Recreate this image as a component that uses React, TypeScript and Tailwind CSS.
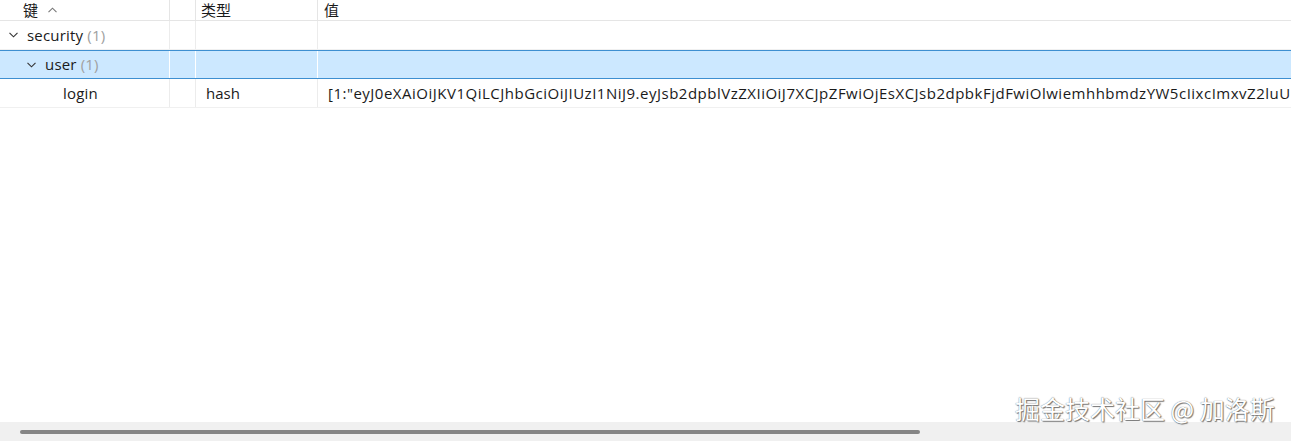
import React from "react";

type Row = {
  key: string;
  count?: number;
  depth: number;
  expanded?: boolean;
  type?: string;
  value?: string;
  selected?: boolean;
};

const token =
  '[1:"eyJ0eXAiOiJKV1QiLCJhbGciOiJIUzI1NiJ9.eyJsb2dpblVzZXIiOiJ7XCJpZFwiOjEsXCJsb2dpbkFjdFwiOlwiemhhbmdzYW5cIixcImxvZ2luU';

const rows: Row[] = [
  { key: "security", count: 1, depth: 0, expanded: true },
  { key: "user", count: 1, depth: 1, expanded: true, selected: true },
  { key: "login", depth: 2, type: "hash", value: token },
];

const cols = "grid grid-cols-[170px_26px_122px_1fr]";
const font = { fontFamily: '"Open Sans", "Noto Sans CJK SC", sans-serif' };

function Chevron({ dir }: { dir: "up" | "down" }) {
  return (
    <svg width="9" height="6" viewBox="0 0 9 6" className="shrink-0">
      <path
        d={dir === "down" ? "M0.5 0.8 L4.5 4.8 L8.5 0.8" : "M0.5 5.2 L4.5 1.2 L8.5 5.2"}
        fill="none"
        stroke={dir === "down" ? "#333" : "#777"}
        strokeWidth="1.1"
      />
    </svg>
  );
}

export default function App() {
  return (
    <div
      className="relative w-[1291px] h-[441px] bg-white flex flex-col overflow-hidden text-[15px] text-[#1a1a1a]"
      style={font}
    >
      <div className="flex-1 overflow-hidden">
        {/* header */}
        <div className={`${cols} h-[21px] border-b border-[#e5e5e5]`}>
          <div className="flex items-center gap-[10px] pl-[23px] border-r border-[#e5e5e5]">
            <span className="leading-none">键</span>
            <Chevron dir="up" />
          </div>
          <div className="border-r border-[#e5e5e5]" />
          <div className="flex items-center pl-[5px] border-r border-[#e5e5e5] leading-none">类型</div>
          <div className="flex items-center pl-[6px] leading-none">值</div>
        </div>

        {rows.map((r) => (
          <div
            key={r.key}
            className={`${cols} h-[29px] ${
              r.selected
                ? "bg-[#cce8ff] border-y border-[#3d8fd1]"
                : "border-b border-[#f0f0f0]"
            }`}
          >
            <div
              className={`flex items-center whitespace-nowrap tracking-[0.2px] border-r ${
                r.selected ? "border-white" : "border-[#ececec]"
              }`}
              style={{ paddingLeft: 4 + r.depth * 18 }}
            >
              <span className="w-[18px] flex justify-center">
                {r.expanded && <Chevron dir="down" />}
              </span>
              <span className="ml-[5px]">{r.key}</span>
              {r.count !== undefined && (
                <span className="ml-[4px] text-[#a0a0a0]">({r.count})</span>
              )}
            </div>
            <div className={`border-r ${r.selected ? "border-white" : "border-[#ececec]"}`} />
            <div
              className={`flex items-center pl-[10px] border-r ${
                r.selected ? "border-white" : "border-[#ececec]"
              }`}
            >
              {r.type}
            </div>
            <div className="flex items-center pl-[10px] whitespace-nowrap overflow-hidden tracking-[0.5px]">
              {r.value}
            </div>
          </div>
        ))}
      </div>

      {/* horizontal scrollbar */}
      <div className="h-[19px] bg-[#f0f0f0] flex items-center pl-[20px]">
        <div className="w-[900px] h-[4px] rounded-full bg-[#858585]" />
      </div>

      <div
        className="absolute left-[1015px] top-[396px] text-[25px] text-white whitespace-nowrap leading-none"
        style={{
          fontFamily: '"Noto Sans CJK SC", sans-serif',
          textShadow: "0 0 1px #555, 1px 1px 1px #777",
        }}
      >
        掘金技术社区 @ 加洛斯
      </div>
    </div>
  );
}
